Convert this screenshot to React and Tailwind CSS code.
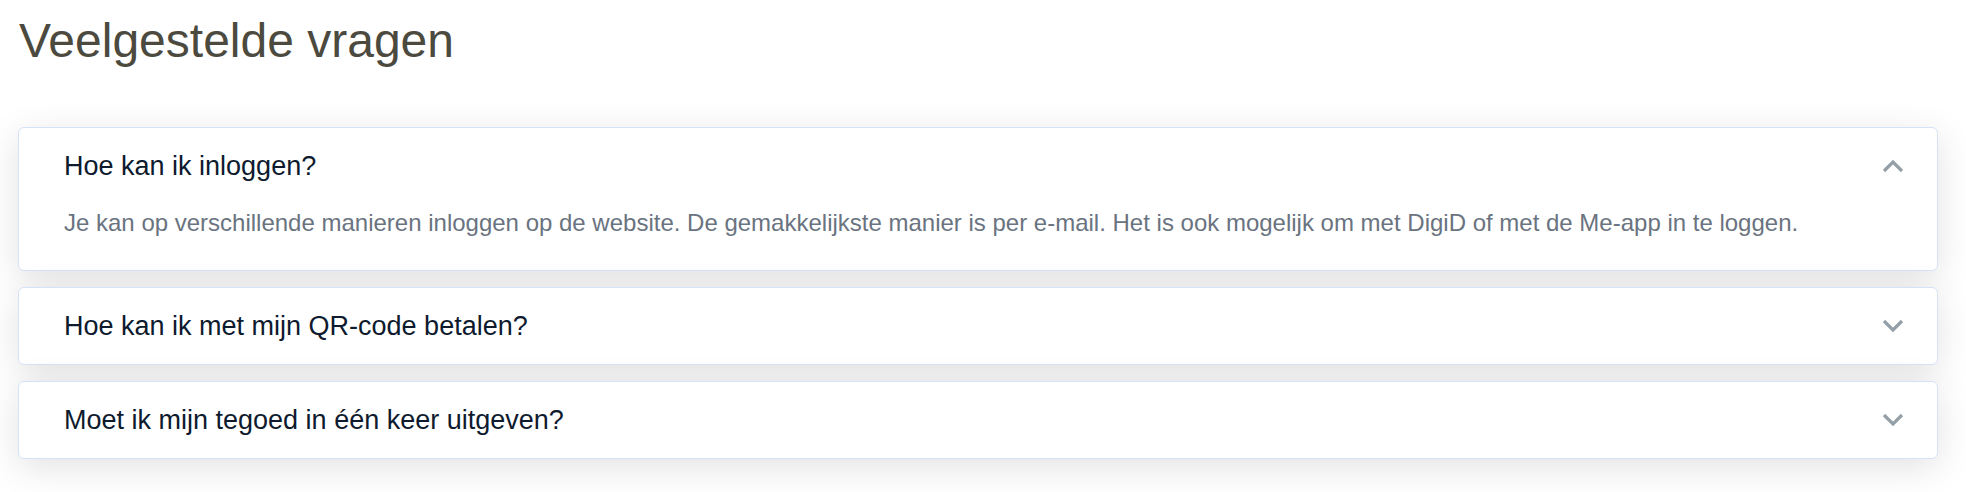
import React from "react";

const items = [
  {
    q: "Hoe kan ik inloggen?",
    a: "Je kan op verschillende manieren inloggen op de website. De gemakkelijkste manier is per e-mail. Het is ook mogelijk om met DigiD of met de Me-app in te loggen.",
    open: true,
  },
  { q: "Hoe kan ik met mijn QR-code betalen?", open: false },
  { q: "Moet ik mijn tegoed in één keer uitgeven?", open: false },
];

function Chevron({ up }) {
  return (
    <svg width="22" height="14" viewBox="0 0 22 14" fill="none" className="shrink-0">
      <polyline
        points={up ? "2,12 11,3 20,12" : "2,2 11,11 20,2"}
        stroke="#959fa8"
        strokeWidth="3.2"
        strokeLinecap="butt"
        strokeLinejoin="miter"
      />
    </svg>
  );
}

export default function App() {
  return (
    <div className="w-[1966px] h-[492px] bg-white overflow-hidden" style={{ fontFamily: '"Liberation Sans", Arial, sans-serif' }}>
      <h1 className="pl-[19px] pt-[17px] text-[48px] leading-none text-[#4c4a3f] font-normal">Veelgestelde vragen</h1>
      <div className="mt-[62px] ml-[18px] w-[1920px] flex flex-col gap-4">
        {items.map((it, i) => (
          <div
            key={i}
            className="bg-white border border-[#d5e3f6] rounded-[6px] shadow-[0_8px_36px_rgba(0,0,0,0.12)]"
          >
            <div className="h-[76px] flex items-center justify-between pl-[45px] pr-[33px]">
              <span className="text-[27px] text-[#0e1a2e]">{it.q}</span>
              <Chevron up={it.open} />
            </div>
            {it.open && (
              <p className="pl-[45px] pr-[33px] pt-[2px] pb-[31px] text-[24px] leading-[33px] text-[#6a7380]">{it.a}</p>
            )}
          </div>
        ))}
      </div>
    </div>
  );
}
